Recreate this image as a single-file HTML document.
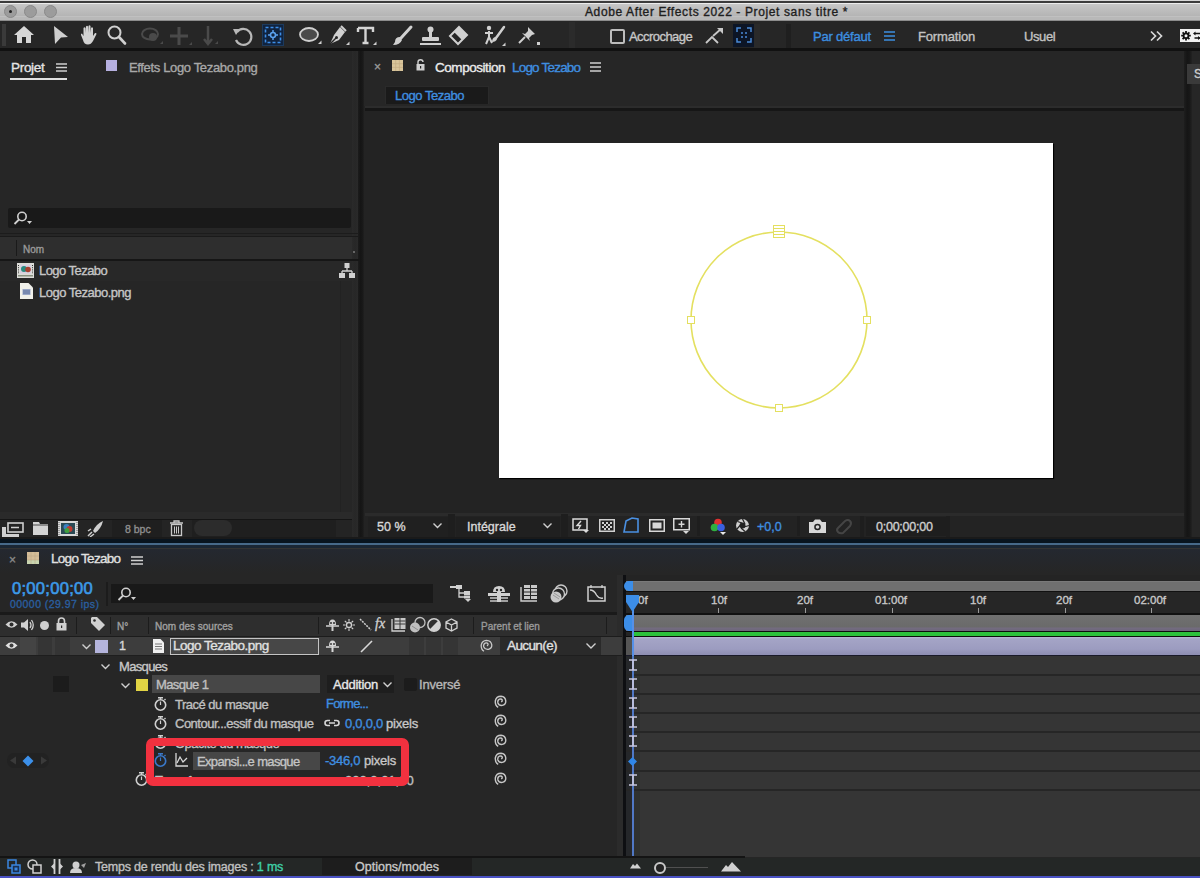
<!DOCTYPE html>
<html><head><meta charset="utf-8">
<style>
*{margin:0;padding:0;box-sizing:border-box}
html,body{width:1200px;height:878px;overflow:hidden;background:#1b1b1b;font-family:"Liberation Sans",sans-serif;}
.a{position:absolute}
.t{position:absolute;white-space:nowrap;line-height:1;-webkit-text-stroke:0.35px currentColor}
svg{position:absolute;overflow:visible}
</style></head><body>
<!-- TITLE BAR -->
<div class="a" style="left:0;top:0;width:1200px;height:3px;background:#3c3c3c"></div>
<div class="a" style="left:0;top:0;width:1200px;height:1px;background:#d8d8d8"></div>
<div class="a" style="left:0;top:3px;width:1200px;height:18px;background:linear-gradient(#ececec 0,#ececec 1px,#c8c8c8 1px,#c2c2c2 4px,#b4b4b4 13px,#c0c0c0 13px,#c0c0c0 14px,#b8b8b8 14px,#b8b8b8 17px,#606060 18px)"></div>
<div class="a" style="left:4px;top:5px;width:13px;height:13px;border-radius:50%;background:#9c9c9c;border:1px solid #8a8a8a"></div>
<div class="a" style="left:9px;top:10px;width:3px;height:3px;border-radius:50%;background:#222"></div>
<div class="a" style="left:24px;top:5px;width:13px;height:13px;border-radius:50%;background:#9c9c9c;border:1px solid #8a8a8a"></div>
<div class="a" style="left:44px;top:5px;width:13px;height:13px;border-radius:50%;background:#9c9c9c;border:1px solid #8a8a8a"></div>
<div class="t" style="left:585px;top:6px;font-size:12px;color:#1e1e1e;letter-spacing:0.62px">Adobe After Effects 2022 - Projet sans titre *</div>

<!-- TOOLBAR -->
<div class="a" style="left:0;top:21px;width:1200px;height:28px;background:#262626"></div>
<div class="a" style="left:0;top:48px;width:1200px;height:3px;background:#111"></div>

<div class="a" style="left:2px;top:24px;width:4px;height:22px;background:#3a3a3a"></div>
<!-- home -->
<svg style="left:14px;top:26px" width="20" height="18" viewBox="0 0 20 18"><path d="M10 0 L20 9 L17 9 L17 17 L12 17 L12 11 L8 11 L8 17 L3 17 L3 9 L0 9 Z" fill="#d6d6d6"/></svg>
<!-- arrow -->
<svg style="left:53px;top:26px" width="16" height="19" viewBox="0 0 16 19"><path d="M1 0 L15 11 L8 11.5 L2 18 Z" fill="#cfcfcf"/></svg>
<!-- hand -->
<svg style="left:80px;top:25px" width="17" height="20" viewBox="0 0 17 20"><path d="M3.5 7 L3.5 3 Q4.5 1.5 5.5 3 L5.5 8 L6 1.5 Q7 0 8 1.5 L8 8 L8.5 1 Q9.5 -0.5 10.5 1 L10.5 8 L11 3 Q12 1.5 13 3 L13 11 L15 8 Q16.5 7.5 16.5 9 L13 16 Q11 19.5 8 19.5 Q4 19.5 3 15 L1 10 Q0.5 8.5 2 8.5 L3.5 11 Z" fill="#d2d2d2"/></svg>
<!-- zoom -->
<svg style="left:107px;top:25px" width="19" height="20" viewBox="0 0 19 20"><circle cx="7.5" cy="7.5" r="6" fill="none" stroke="#d0d0d0" stroke-width="2"/><path d="M12 12 L18 18.5" stroke="#d0d0d0" stroke-width="2.6" stroke-linecap="round"/></svg>
<!-- faded camera tools -->
<svg style="left:140px;top:26px" width="24" height="21" viewBox="0 0 24 21"><ellipse cx="10" cy="8" rx="8" ry="5.5" fill="none" stroke="#4a4a4a" stroke-width="2"/><circle cx="13" cy="11" r="4" fill="#4a4a4a"/><path d="M20 18 l3 0 l0 -3z" fill="#4a4a4a"/></svg>
<svg style="left:170px;top:27px" width="22" height="20" viewBox="0 0 22 20"><path d="M9 0 L9 18 M0 9 L18 9" stroke="#4a4a4a" stroke-width="3"/><path d="M19 18 l3 0 l0 -3z" fill="#4a4a4a"/></svg>
<svg style="left:202px;top:26px" width="16" height="21" viewBox="0 0 16 21"><path d="M6 0 L6 17 M2 13 L6 18 L10 13" stroke="#4a4a4a" stroke-width="2.5" fill="none"/><path d="M13 18 l3 0 l0 -3z" fill="#4a4a4a"/></svg>
<!-- rotation -->
<svg style="left:233px;top:27px" width="21" height="19" viewBox="0 0 21 19"><path d="M4 5 A8 8 0 1 1 3 13" fill="none" stroke="#b8b8b8" stroke-width="2.2"/><path d="M0 2 L7 2 L3 8 Z" fill="#b8b8b8"/></svg>
<!-- anchor active -->
<div class="a" style="left:262px;top:24px;width:22px;height:22px;background:#10233f;border:1px solid #1b3a5e"></div>
<svg style="left:264px;top:26px" width="18" height="18" viewBox="0 0 18 18"><rect x="1.5" y="1.5" width="15" height="15" fill="none" stroke="#3d8ee8" stroke-width="1.6" stroke-dasharray="3 2"/><circle cx="9" cy="9" r="2.5" fill="none" stroke="#5aa0ee" stroke-width="1.6"/><path d="M9 4 L9 6 M9 12 L9 14 M4 9 L6 9 M12 9 L14 9" stroke="#5aa0ee" stroke-width="1.5"/></svg>
<!-- ellipse -->
<svg style="left:299px;top:27px" width="23" height="18" viewBox="0 0 23 18"><ellipse cx="10" cy="7.5" rx="9" ry="6.5" fill="#4a4a4a" stroke="#cfcfcf" stroke-width="1.8"/><path d="M19 17 l3.5 0 l0 -3.5z" fill="#cfcfcf"/></svg>
<!-- pen -->
<svg style="left:328px;top:26px" width="22" height="20" viewBox="0 0 22 20"><path d="M12 1 L17 6 L11 14 L2 18 L6 9 Z" fill="#d0d0d0"/><path d="M2 18 L8 12" stroke="#262626" stroke-width="1.4"/><circle cx="8.5" cy="11.5" r="1.5" fill="#262626"/><path d="M13 0 L18 5" stroke="#d0d0d0" stroke-width="2"/><path d="M18 19 l3.5 0 l0 -3.5z" fill="#cfcfcf"/></svg>
<!-- T -->
<svg style="left:357px;top:27px" width="20" height="19" viewBox="0 0 20 19"><path d="M1 1 L16 1 L16 5 M1 1 L1 5 M8.5 1 L8.5 16 M5.5 16 L11.5 16" stroke="#d4d4d4" stroke-width="2.4" fill="none"/><path d="M16 18 l3.5 0 l0 -3.5z" fill="#cfcfcf"/></svg>
<!-- brush -->
<svg style="left:392px;top:26px" width="20" height="20" viewBox="0 0 20 20"><path d="M19 1 L9 12" stroke="#d0d0d0" stroke-width="3" stroke-linecap="round"/><path d="M8 11 Q3 11 3 16 L1 19 Q8 19 10 14 Z" fill="#d0d0d0"/></svg>
<!-- stamp -->
<svg style="left:420px;top:26px" width="21" height="20" viewBox="0 0 21 20"><circle cx="10.5" cy="3.5" r="3" fill="#d0d0d0"/><rect x="9" y="5" width="3" height="7" fill="#d0d0d0"/><rect x="2" y="11" width="17" height="4" rx="1" fill="#d0d0d0"/><rect x="0" y="17" width="21" height="2" fill="#d0d0d0"/></svg>
<!-- eraser -->
<svg style="left:448px;top:26px" width="20" height="20" viewBox="0 0 20 20"><path d="M11 1 L19 9 L10 18 L2 10 Z" fill="none" stroke="#d0d0d0" stroke-width="2"/><path d="M11 1 L19 9 L14 14 L6 6 Z" fill="#d0d0d0"/></svg>
<!-- roto -->
<svg style="left:482px;top:25px" width="24" height="22" viewBox="0 0 24 22"><circle cx="7" cy="3" r="2.2" fill="#d0d0d0"/><path d="M7 6 L7 12 M3 8 L11 8 M7 12 L4 19 M7 12 L10 18" stroke="#d0d0d0" stroke-width="2" fill="none"/><path d="M22 2 L14 13" stroke="#d0d0d0" stroke-width="2.5" stroke-linecap="round"/><path d="M13 12 Q10 13 10 17 Q14 17 15 14 Z" fill="#d0d0d0"/><path d="M20 21 l3.5 0 l0 -3.5z" fill="#cfcfcf"/></svg>
<!-- pin -->
<svg style="left:518px;top:25px" width="23" height="22" viewBox="0 0 23 22"><path d="M10 2 L17 9 L14 10 L11 13 L12 16 L4 8 L7 9 L10 6 Z" fill="#d0d0d0"/><path d="M7 12 L1 18" stroke="#d0d0d0" stroke-width="2"/><rect x="19" y="17" width="3" height="3" fill="#cfcfcf"/></svg>
<div class="a" style="left:569px;top:22px;width:6px;height:26px;background:#2b2b2b"></div><div class="a" style="left:754px;top:24px;width:6px;height:24px;background:#2a2a2a"></div><div class="a" style="left:786px;top:24px;width:5px;height:24px;background:#1f1f1f"></div>
<!-- Accrochage -->
<div class="a" style="left:610px;top:29px;width:15px;height:15px;border:2px solid #bdbdbd;border-radius:2px"></div>
<div class="t" style="left:629px;top:30px;font-size:13px;color:#c8c8c8;letter-spacing:-0.55px">Accrochage</div>
<svg style="left:705px;top:27px" width="19" height="18" viewBox="0 0 19 18"><path d="M1 16 L7 10 L13 16" stroke="#c8c8c8" stroke-width="1.8" fill="none"/><path d="M8 9 L16 2" stroke="#c8c8c8" stroke-width="1.8"/><path d="M12 1 L18 1 L18 7 Z" fill="#c8c8c8"/></svg>
<div class="a" style="left:733px;top:24px;width:21px;height:23px;background:#0c1526"></div>
<svg style="left:736px;top:27px" width="16" height="16" viewBox="0 0 16 16"><path d="M1 5 L1 1 L5 1 M11 1 L15 1 L15 5 M15 11 L15 15 L11 15 M5 15 L1 15 L1 11" stroke="#4a8ad8" stroke-width="1.5" fill="none"/><circle cx="6" cy="6" r="1" fill="#4a8ad8"/><circle cx="10" cy="6" r="1" fill="#4a8ad8"/><circle cx="6" cy="10" r="1" fill="#4a8ad8"/><circle cx="10" cy="10" r="1" fill="#4a8ad8"/></svg>
<!-- workspaces -->
<div class="t" style="left:813px;top:30px;font-size:13px;color:#3c8fe0;letter-spacing:-0.2px">Par défaut</div>
<svg style="left:884px;top:31px" width="11" height="10" viewBox="0 0 11 10"><path d="M0 1 H11 M0 5 H11 M0 9 H11" stroke="#3c8fe0" stroke-width="1.4"/></svg>
<div class="t" style="left:918px;top:30px;font-size:13px;color:#c2c2c2;letter-spacing:-0.15px">Formation</div>
<div class="t" style="left:1024px;top:30px;font-size:13px;color:#c2c2c2;letter-spacing:-0.4px">Usuel</div>
<svg style="left:1150px;top:30px" width="14" height="12" viewBox="0 0 14 12"><path d="M1 1.5 L5.5 6 L1 10.5 M7 1.5 L11.5 6 L7 10.5" stroke="#d8d8d8" stroke-width="1.7" fill="none"/></svg>
<div class="a" style="left:1180px;top:29px;width:20px;height:13px;background:#f0f0f0"></div><svg style="left:1180px;top:29px" width="20" height="13" viewBox="0 0 20 13"><g transform="translate(6 6.7)"><circle r="3.3" fill="#111"/><path d="M0 -4.8 V4.8 M-4.8 0 H4.8 M-3.4 -3.4 L3.4 3.4 M3.4 -3.4 L-3.4 3.4" stroke="#111" stroke-width="1.8"/><circle r="1.5" fill="#f0f0f0"/></g><path d="M14.5 4.5 H20 M20 9 H14.5" stroke="#111" stroke-width="1.3"/><path d="M13 4.5 L15.5 2.5 V6.5 Z M20.5 9 L18 7 V11 Z" fill="#111"/></svg>

<!-- PROJECT PANEL -->
<div class="a" style="left:0;top:51px;width:359px;height:486px;background:#262626"></div><div class="a" style="left:352px;top:51px;width:6px;height:486px;background:linear-gradient(90deg,#2a2a2a,#272727 50%,#2a2a2a)"></div>
<div class="a" style="left:358px;top:51px;width:6px;height:486px;background:linear-gradient(90deg,#1c1c1c,#151515 40%,#171717 70%,#202020)"></div>

<div class="t" style="left:11px;top:61px;font-size:13.5px;color:#e4e4e4;letter-spacing:-0.3px">Projet</div>
<svg style="left:56px;top:63px" width="11" height="9" viewBox="0 0 11 9"><path d="M0 1 H11 M0 4.5 H11 M0 8 H11" stroke="#cfcfcf" stroke-width="1.3"/></svg>
<div class="a" style="left:10px;top:78px;width:57px;height:2px;background:#e0e0e0"></div>
<div class="a" style="left:106px;top:60px;width:11px;height:11px;background:#b6b0e0"></div>
<div class="t" style="left:129px;top:61px;font-size:13px;color:#a8a8a8;letter-spacing:-0.35px">Effets  Logo Tezabo.png</div>
<!-- search -->
<div class="a" style="left:8px;top:208px;width:343px;height:20px;background:#191919;border-radius:2px"></div>
<svg style="left:13px;top:211px" width="20" height="14" viewBox="0 0 20 14"><circle cx="9" cy="5.5" r="4.2" fill="none" stroke="#d0d0d0" stroke-width="1.6"/><path d="M6 8.5 L1.5 13" stroke="#d0d0d0" stroke-width="1.8"/><path d="M14 10 L19 10 L16.5 13 Z" fill="#d0d0d0"/></svg>
<div class="a" style="left:0;top:233px;width:359px;height:1px;background:#1c1c1c"></div>
<div class="a" style="left:0;top:236px;width:359px;height:1px;background:#1a1a1a"></div>
<!-- header Nom -->
<div class="a" style="left:0;top:237px;width:352px;height:22px;background:#2e2e2e"></div>
<div class="a" style="left:16px;top:240px;width:1px;height:16px;background:#1a1a1a"></div>
<div class="t" style="left:23px;top:245px;font-size:10px;color:#9a9a9a">Nom</div>
<div class="a" style="left:353px;top:251px;width:2px;height:2px;background:#666"></div>
<div class="a" style="left:0;top:259px;width:359px;height:2px;background:#161616"></div>
<!-- rows -->
<div class="a" style="left:0;top:261px;width:352px;height:20px;background:#282828"></div>
<svg style="left:17px;top:263px" width="17" height="15" viewBox="0 0 17 15"><rect x="0" y="0" width="17" height="15" fill="#dcdcd8"/><rect x="3" y="1.5" width="11" height="9" fill="#d8d0e0"/><circle cx="7" cy="6" r="3" fill="#2a8a80"/><circle cx="11" cy="6.5" r="2.8" fill="#a84030"/><path d="M1.5 2 V11 M15.5 2 V11" stroke="#333" stroke-width="1" stroke-dasharray="1 1.2"/><rect x="1" y="12" width="15" height="1.5" fill="#889080"/></svg>
<div class="t" style="left:39px;top:264px;font-size:13px;color:#c6c6c6;letter-spacing:-0.55px">Logo Tezabo</div>
<svg style="left:339px;top:263px" width="16" height="15" viewBox="0 0 16 15"><rect x="5.5" y="0" width="5" height="5" fill="#d0d0d0"/><path d="M8 5 V8 M3 8 H13 M3 8 V10 M13 8 V10" stroke="#d0d0d0" stroke-width="1.3" fill="none"/><rect x="0" y="10" width="6" height="5" fill="#d0d0d0"/><rect x="10" y="10" width="6" height="5" fill="#d0d0d0"/></svg>
<svg style="left:20px;top:283px" width="13" height="16" viewBox="0 0 13 16"><path d="M0 0 H8.5 L13 4.5 V16 H0 Z" fill="#f0f0ea"/><rect x="2.5" y="6" width="8" height="6" fill="#9aa8c8"/><path d="M3 8 H10 M3 10 H10" stroke="#566a98" stroke-width="1"/></svg>
<div class="t" style="left:39px;top:286px;font-size:13px;color:#c6c6c6;letter-spacing:-0.5px">Logo Tezabo.png</div>

<div class="a" style="left:340px;top:281px;width:1px;height:232px;background:#222"></div>
<!-- bottom toolbar -->
<div class="a" style="left:0;top:512px;width:352px;height:7px;background:#2a2a2a"></div><div class="a" style="left:0;top:519px;width:352px;height:1px;background:#151515"></div>
<div class="a" style="left:0;top:520px;width:352px;height:17px;background:#242424"></div><div class="a" style="left:192px;top:520px;width:144px;height:17px;background:#1f1f1f"></div><div class="a" style="left:112px;top:520px;width:50px;height:17px;background:#1f1f1f"></div>
<svg style="left:2px;top:521px" width="21" height="16" viewBox="0 0 21 16"><rect x="6" y="2" width="15" height="9" fill="none" stroke="#d0d0d0" stroke-width="1.6"/><path d="M9 6.5 H17" stroke="#d0d0d0" stroke-width="1.5"/><rect x="0" y="6" width="4" height="10" fill="#d0d0d0"/><rect x="4" y="13" width="13" height="3" fill="#d0d0d0"/></svg>
<svg style="left:33px;top:522px" width="15" height="13" viewBox="0 0 15 13"><path d="M0 0 H6 L7 2 H15 V13 H0 Z" fill="#d4d4d4"/><path d="M0 3 H15" stroke="#232323" stroke-width="0.8"/></svg>
<svg style="left:58px;top:521px" width="20" height="15" viewBox="0 0 20 15"><rect x="0" y="0" width="20" height="15" fill="#d8d8d8"/><rect x="3" y="2" width="14" height="11" fill="#2a4a55"/><circle cx="8.5" cy="6" r="3" fill="#3a80c0"/><circle cx="11.5" cy="8" r="3" fill="#c03a30"/><circle cx="9" cy="9.5" r="2.5" fill="#40a040"/><path d="M1 1 V14 M19 1 V14" stroke="#666" stroke-width="1" stroke-dasharray="1 1"/></svg>
<svg style="left:88px;top:521px" width="16" height="16" viewBox="0 0 16 16"><path d="M15 0 Q8 3 5 10 L7 12 Q13 8 15 0 Z" fill="#d0d0d0"/><path d="M4 11 L0 15 M6 13 L2 16 M3 8 L0 10" stroke="#d0d0d0" stroke-width="1.5"/></svg>

<div class="t" style="left:125px;top:524px;font-size:10.5px;color:#8e8e8e">8 bpc</div>
<svg style="left:170px;top:521px" width="13" height="15" viewBox="0 0 13 15"><path d="M0 2 H13 M4 2 V0 H9 V2" stroke="#c8c8c8" stroke-width="1.3" fill="none"/><rect x="1.5" y="3.5" width="10" height="11" fill="none" stroke="#c8c8c8" stroke-width="1.3"/><path d="M4.5 5.5 V12.5 M6.5 5.5 V12.5 M8.5 5.5 V12.5" stroke="#c8c8c8" stroke-width="1"/></svg>
<div class="a" style="left:194px;top:520px;width:38px;height:16px;border-radius:8px;background:#2c2c2c"></div>

<!-- COMP PANEL -->
<div class="a" style="left:364px;top:51px;width:820px;height:486px;background:#232323"></div><div class="a" style="left:364px;top:51px;width:820px;height:55px;background:#262626"></div>
<div class="a" style="left:1184px;top:51px;width:8px;height:486px;background:linear-gradient(90deg,#1e1e1e,#151515 40%,#181818 70%,#222)"></div>
<div class="a" style="left:1192px;top:51px;width:8px;height:486px;background:#262626"></div>

<div class="t" style="left:374px;top:61px;font-size:12px;color:#9a9a9a">×</div>
<svg style="left:392px;top:60px" width="11" height="11" viewBox="0 0 11 11"><rect width="11" height="11" fill="#d8c49a"/><path d="M3.7 0 V11 M7.4 0 V11 M0 3.7 H11 M0 7.4 H11" stroke="#c0a880" stroke-width="0.6"/></svg>
<svg style="left:416px;top:59px" width="9" height="12" viewBox="0 0 9 12"><path d="M2 5 V3 Q2 0.8 4.5 0.8 Q7 0.8 7 3" fill="none" stroke="#cfcfcf" stroke-width="1.4"/><rect x="0.5" y="5" width="8" height="6.5" fill="#cfcfcf"/><rect x="4" y="7" width="1.2" height="2.5" fill="#232323"/></svg>
<div class="t" style="left:435px;top:61px;font-size:13.5px;color:#ececec;letter-spacing:-0.45px">Composition</div>
<div class="t" style="left:512px;top:61px;font-size:13.5px;color:#3f8fe0;letter-spacing:-0.8px">Logo Tezabo</div>
<svg style="left:590px;top:62px" width="11" height="10" viewBox="0 0 11 10"><path d="M0 1 H11 M0 5 H11 M0 9 H11" stroke="#cfcfcf" stroke-width="1.3"/></svg>
<div class="a" style="left:385px;top:86px;width:104px;height:18px;background:#1a1a1a;border:1px solid #2a2a2a;border-bottom:none"></div>
<div class="t" style="left:395px;top:89px;font-size:13px;color:#3f8fe0;letter-spacing:-0.47px">Logo Tezabo</div>
<div class="a" style="left:365px;top:106px;width:819px;height:2px;background:#2c2c2c"></div><div class="a" style="left:365px;top:108px;width:819px;height:3px;background:#161616"></div>
<!-- comp canvas -->
<div class="a" style="left:499px;top:143px;width:554px;height:335px;background:#ffffff;box-shadow:1px 1px 1px #000"></div>
<svg style="left:499px;top:143px" width="554" height="335" viewBox="0 0 554 335">
<circle cx="280" cy="177" r="88" fill="none" stroke="#e4e060" stroke-width="1.6"/>
<rect x="274.5" y="82.5" width="11" height="12" fill="#fff" stroke="#e4e060" stroke-width="1"/>
<path d="M275 85.5 H285 M275 88.5 H285 M275 91.5 H285" stroke="#e4e060" stroke-width="1"/>
<rect x="188.5" y="173.5" width="7" height="7" fill="#fff" stroke="#e4e060" stroke-width="1"/>
<rect x="364.5" y="173.5" width="7" height="7" fill="#fff" stroke="#e4e060" stroke-width="1"/>
<rect x="276.5" y="261.5" width="7" height="7" fill="#fff" stroke="#e4e060" stroke-width="1"/>
</svg>
<!-- right strip -->
<div class="a" style="left:1187px;top:64px;width:13px;height:20px;background:#3a3a3a"></div>
<div class="t" style="left:1194px;top:68px;font-size:12px;color:#cfcfcf">S</div>
<!-- viewer toolbar -->
<div class="a" style="left:365px;top:513px;width:819px;height:3px;background:#2b2b2b"></div>
<div class="a" style="left:368px;top:517px;width:80px;height:20px;background:#202020"></div>
<div class="t" style="left:377px;top:521px;font-size:12.5px;color:#d8d8d8">50 %</div>
<svg style="left:433px;top:523px" width="9" height="6" viewBox="0 0 9 6"><path d="M0.5 0.5 L4.5 4.5 L8.5 0.5" stroke="#cfcfcf" stroke-width="1.4" fill="none"/></svg>
<div class="a" style="left:448px;top:514px;width:7px;height:23px;background:#1e1e1e"></div>
<div class="a" style="left:456px;top:517px;width:104px;height:20px;background:#202020"></div>
<div class="t" style="left:467px;top:521px;font-size:12.5px;color:#d8d8d8">Intégrale</div>
<svg style="left:543px;top:523px" width="9" height="6" viewBox="0 0 9 6"><path d="M0.5 0.5 L4.5 4.5 L8.5 0.5" stroke="#cfcfcf" stroke-width="1.4" fill="none"/></svg>
<div class="a" style="left:561px;top:514px;width:7px;height:23px;background:#1e1e1e"></div>
<svg style="left:572px;top:518px" width="17" height="16" viewBox="0 0 17 16"><rect x="1" y="1" width="14" height="11" fill="none" stroke="#dcdcdc" stroke-width="1.5"/><path d="M9 3 L5 7.5 H8.5 L6.5 11" stroke="#dcdcdc" stroke-width="1.4" fill="none"/><path d="M11 12 H17 L14 15 Z" fill="#dcdcdc"/></svg>
<svg style="left:599px;top:519px" width="16" height="13" viewBox="0 0 16 13"><rect x="0.75" y="0.75" width="14.5" height="11.5" fill="none" stroke="#d0d0d0" stroke-width="1.5"/><path d="M3 3h2v2h-2zM7 3h2v2h-2zM11 3h2v2h-2zM5 5h2v2h-2zM9 5h2v2h-2zM3 7h2v2h-2zM7 7h2v2h-2zM11 7h2v2h-2zM5 9h2v2h-2zM9 9h2v2h-2z" fill="#d0d0d0"/></svg>
<svg style="left:623px;top:517px" width="17" height="17" viewBox="0 0 17 17"><path d="M3 4 L9 1 L15 2 L15 15 L1 15 Z" fill="none" stroke="#4a90e2" stroke-width="1.6"/></svg>
<svg style="left:649px;top:519px" width="16" height="13" viewBox="0 0 16 13"><rect x="0.75" y="0.75" width="14.5" height="11.5" fill="none" stroke="#d8d8d8" stroke-width="1.5"/><rect x="3.5" y="3.5" width="9" height="6" fill="#d8d8d8"/></svg>
<svg style="left:673px;top:518px" width="18" height="17" viewBox="0 0 18 17"><rect x="0.75" y="0.75" width="15.5" height="11" fill="none" stroke="#d8d8d8" stroke-width="1.5"/><path d="M8.5 3 V9.5 M5.5 6.25 H11.5" stroke="#d8d8d8" stroke-width="1.4"/><path d="M10 13 H16 L13 16 Z" fill="#d8d8d8"/></svg>
<div class="a" style="left:697px;top:516px;width:3px;height:20px;background:#1e1e1e"></div>
<svg style="left:709px;top:518px" width="18" height="17" viewBox="0 0 18 17"><circle cx="9" cy="4.5" r="3.8" fill="#e03030"/><circle cx="5.5" cy="9.5" r="3.8" fill="#30b040"/><circle cx="12" cy="9.5" r="3.8" fill="#3a60e0"/><path d="M11 14 H17 L14 17 Z" fill="#e8e8e8"/></svg>
<svg style="left:735px;top:518px" width="15" height="15" viewBox="0 0 15 15"><circle cx="7.5" cy="7.5" r="6.5" fill="#d0d0d0"/><circle cx="7.5" cy="7.5" r="3" fill="#232323"/><path d="M7.5 1 L10 6 M14 7.5 L9 9 M10 13.5 L6 10 M2 11 L5 7.5 M2.5 3.5 L7 5" stroke="#232323" stroke-width="1.2"/></svg>
<div class="t" style="left:757px;top:521px;font-size:12.5px;color:#3f8fe0">+0,0</div>
<div class="a" style="left:797px;top:516px;width:3px;height:20px;background:#1e1e1e"></div>
<svg style="left:809px;top:519px" width="17" height="14" viewBox="0 0 17 14"><path d="M0 3 H4 L6 0.5 H11 L13 3 H17 V14 H0 Z" fill="#d8d8d8"/><circle cx="8.5" cy="8" r="3.3" fill="#232323"/><circle cx="8.5" cy="8" r="1.8" fill="#d8d8d8"/></svg>
<svg style="left:835px;top:518px" width="18" height="16" viewBox="0 0 18 16"><path d="M3 10 L10 3 Q13 1 15 3 Q17 5 15 8 L8 15 Q5 16 3 14 Q1 12 3 10 Z" fill="none" stroke="#454545" stroke-width="2"/></svg>
<div class="a" style="left:860px;top:516px;width:4px;height:21px;background:#1e1e1e"></div>
<div class="a" style="left:866px;top:517px;width:80px;height:19px;background:#1e1e1e"></div>
<div class="t" style="left:876px;top:521px;font-size:12.5px;color:#cfcfcf;letter-spacing:-0.25px">0;00;00;00</div>
<div class="a" style="left:946px;top:516px;width:4px;height:21px;background:#1e1e1e"></div>

<!-- DIVIDER -->
<div class="a" style="left:0;top:537px;width:1200px;height:2px;background:#1a1a1a"></div>
<div class="a" style="left:0;top:539px;width:1200px;height:4px;background:#08141f"></div>
<div class="a" style="left:0;top:543px;width:1200px;height:2px;background:#46698a"></div>
<div class="a" style="left:0;top:545px;width:1200px;height:3px;background:#1a2634"></div><div class="a" style="left:0;top:548px;width:1200px;height:1px;background:#333"></div>

<!-- TIMELINE PANEL -->
<div class="a" style="left:0;top:549px;width:1200px;height:326px;background:#262626"></div><div class="a" style="left:0;top:549px;width:1200px;height:24px;background:linear-gradient(#242830,#262626)"></div>
<div class="a" style="left:0;top:875px;width:1200px;height:3px;background:#4a52c4"></div>

<div class="t" style="left:9px;top:554px;font-size:12px;color:#8a8a8a">×</div>
<svg style="left:27px;top:552px" width="12" height="12" viewBox="0 0 12 12"><rect width="12" height="12" fill="#d4bc98"/><rect y="8" width="12" height="4" fill="#c8d4b0"/><path d="M4 0 V12 M8 0 V12 M0 4 H12 M0 8 H12" stroke="#bca888" stroke-width="0.6"/></svg>
<div class="t" style="left:51px;top:552px;font-size:13.5px;color:#e0e0e0;letter-spacing:-0.7px">Logo Tezabo</div>
<svg style="left:131px;top:556px" width="12" height="9" viewBox="0 0 12 9"><path d="M0 1 H12 M0 4.5 H12 M0 8 H12" stroke="#cfcfcf" stroke-width="1.3"/></svg>
<div class="t" style="left:12px;top:580px;font-size:16.5px;color:#3c9ae8;letter-spacing:0.3px;-webkit-text-stroke:0.6px #3c9ae8">0;00;00;00</div>
<div class="t" style="left:10px;top:599px;font-size:10.5px;color:#2a5e9e;letter-spacing:0.45px">00000 (29.97 ips)</div>
<div class="a" style="left:106px;top:582px;width:2px;height:24px;background:#1c1c1c"></div>
<div class="a" style="left:111px;top:584px;width:322px;height:19px;background:#191919"></div>
<svg style="left:117px;top:587px" width="20" height="14" viewBox="0 0 20 14"><circle cx="9" cy="5.5" r="4.2" fill="none" stroke="#d0d0d0" stroke-width="1.6"/><path d="M6 8.5 L1.5 13" stroke="#d0d0d0" stroke-width="1.8"/><path d="M14 10 L19 10 L16.5 13 Z" fill="#d0d0d0"/></svg>
<!-- timeline tool icons -->
<svg style="left:450px;top:585px" width="22" height="17" viewBox="0 0 22 17"><path d="M0 2 H6" stroke="#d0d0d0" stroke-width="2"/><rect x="6" y="0" width="6" height="4" fill="#d0d0d0"/><path d="M9 4 V12 H14 M9 8 H14" stroke="#d0d0d0" stroke-width="1.3" fill="none"/><rect x="14" y="6" width="6" height="4" fill="#d0d0d0"/><rect x="14" y="10.5" width="6" height="3" fill="#d0d0d0"/><path d="M15 14 H21 L18 17 Z" fill="#d0d0d0"/></svg>
<svg style="left:488px;top:585px" width="22" height="17" viewBox="0 0 22 17"><path d="M5 7 Q5 1 11 1 Q17 1 17 7 Z" fill="#d0d0d0"/><circle cx="9" cy="5" r="1.2" fill="#262626"/><circle cx="13" cy="5" r="1.2" fill="#262626"/><rect x="0" y="8" width="22" height="3" fill="#d0d0d0"/><rect x="2" y="12" width="18" height="2" fill="#a0a0a0"/><rect x="2" y="15" width="18" height="2" fill="#a0a0a0"/><rect x="9" y="7" width="4" height="10" fill="#d0d0d0"/></svg>
<svg style="left:520px;top:585px" width="18" height="17" viewBox="0 0 18 17"><path d="M1 2 V16 H17" stroke="#d0d0d0" stroke-width="1.4" fill="none"/><rect x="4" y="0" width="13" height="14" fill="#c8c8c8"/><path d="M4 3.5 H17 M4 7 H17 M4 10.5 H17 M10.5 0 V14" stroke="#262626" stroke-width="1"/></svg>
<svg style="left:549px;top:585px" width="19" height="18" viewBox="0 0 19 18"><circle cx="12" cy="6" r="6" fill="none" stroke="#c8c8c8" stroke-width="1.4"/><circle cx="9.5" cy="9" r="6" fill="#262626" stroke="#c8c8c8" stroke-width="1.4"/><circle cx="7" cy="12" r="5.5" fill="#c8c8c8"/><path d="M4 10 L10 14 M5 8 L11 12" stroke="#8a8a8a" stroke-width="0.8"/></svg>
<svg style="left:587px;top:585px" width="19" height="17" viewBox="0 0 19 17"><rect x="1" y="2" width="17" height="14" fill="none" stroke="#d0d0d0" stroke-width="1.5"/><path d="M3 5 Q7 5 9.5 10 Q12 14 16 13" stroke="#d0d0d0" stroke-width="1.4" fill="none"/><path d="M4 0 V3 M15 0 V3" stroke="#d0d0d0" stroke-width="1.3"/></svg>
<div class="a" style="left:0;top:612px;width:622px;height:3px;background:#1a1a1a"></div>
<!-- header row -->
<div class="a" style="left:0;top:615px;width:622px;height:21px;background:#2e2e2e"></div>
<svg style="left:5px;top:620px" width="13" height="9" viewBox="0 0 13 9"><path d="M0.5 4.5 Q6.5 -2 12.5 4.5 Q6.5 11 0.5 4.5 Z" fill="#d0d0d0"/><circle cx="6.5" cy="4.5" r="2" fill="#2c2c2c"/></svg>
<svg style="left:21px;top:618px" width="14" height="14" viewBox="0 0 14 14"><path d="M0 4.5 H3 L7 1 V13 L3 9.5 H0 Z" fill="#d0d0d0"/><path d="M9 4 Q11 7 9 10 M10.5 2 Q14 7 10.5 12" stroke="#d0d0d0" stroke-width="1.3" fill="none"/></svg>
<div class="a" style="left:40px;top:621px;width:9px;height:9px;border-radius:50%;background:#cfcfcf"></div>
<svg style="left:56px;top:617px" width="11" height="14" viewBox="0 0 11 14"><path d="M2.5 6 V4 Q2.5 1 5.5 1 Q8.5 1 8.5 4 V6" fill="none" stroke="#d0d0d0" stroke-width="1.6"/><rect x="0.5" y="6" width="10" height="7.5" fill="#d0d0d0"/><rect x="5" y="8.5" width="1.2" height="2.5" fill="#2c2c2c"/></svg>
<div class="a" style="left:76px;top:617px;width:1px;height:17px;background:#1c1c1c"></div>
<svg style="left:91px;top:617px" width="14" height="14" viewBox="0 0 14 14"><path d="M0 1 V6 L8 14 L14 8 L6 0 H1 Z" fill="#d0d0d0"/><circle cx="3.5" cy="3.5" r="1.3" fill="#2c2c2c"/></svg>
<div class="a" style="left:110px;top:617px;width:1px;height:17px;background:#1c1c1c"></div>
<div class="t" style="left:117px;top:622px;font-size:10px;color:#a0a0a0">N°</div>
<div class="a" style="left:148px;top:617px;width:1px;height:17px;background:#1c1c1c"></div>
<div class="t" style="left:155px;top:622px;font-size:10px;color:#a0a0a0">Nom des sources</div>
<div class="a" style="left:318px;top:617px;width:1px;height:17px;background:#1c1c1c"></div>

<div class="a" style="left:622px;top:575px;width:578px;height:282px;background:#242424"></div><div class="a" style="left:617px;top:575px;width:6px;height:282px;background:#2b2b2b"></div><div class="a" style="left:623px;top:575px;width:3px;height:282px;background:#0e0f12"></div><div class="a" style="left:626px;top:581px;width:574px;height:10px;background:#707070;border-top:1px solid #7a7a7a"></div><div class="a" style="left:624px;top:581px;width:9px;height:10px;background:#3c8ee8;border-radius:5px 0 0 5px"></div><div class="a" style="left:626px;top:591px;width:574px;height:1px;background:#111"></div><div class="a" style="left:626px;top:592px;width:574px;height:21px;background:#262626"></div><div class="t" style="left:638px;top:595px;font-size:11.5px;color:#c8c8c8">0f</div><div class="t" style="left:711px;top:595px;font-size:11.5px;color:#c8c8c8">10f</div><div class="t" style="left:797px;top:595px;font-size:11.5px;color:#c8c8c8">20f</div><div class="t" style="left:875px;top:595px;font-size:11.5px;color:#c8c8c8">01:00f</div><div class="t" style="left:970px;top:595px;font-size:11.5px;color:#c8c8c8">10f</div><div class="t" style="left:1056px;top:595px;font-size:11.5px;color:#c8c8c8">20f</div><div class="t" style="left:1134px;top:595px;font-size:11.5px;color:#c8c8c8">02:00f</div><div class="a" style="left:718px;top:608px;width:1px;height:5px;background:#9a9a9a"></div><div class="a" style="left:805px;top:608px;width:1px;height:5px;background:#9a9a9a"></div><div class="a" style="left:892px;top:608px;width:1px;height:5px;background:#9a9a9a"></div><div class="a" style="left:978px;top:608px;width:1px;height:5px;background:#9a9a9a"></div><div class="a" style="left:1065px;top:608px;width:1px;height:5px;background:#9a9a9a"></div><div class="a" style="left:1151px;top:608px;width:1px;height:5px;background:#9a9a9a"></div><div class="a" style="left:626px;top:613px;width:574px;height:2px;background:#111"></div><div class="a" style="left:626px;top:615px;width:574px;height:16px;background:linear-gradient(#707070 0,#6a6a6a 12px,#746c80 13px,#6c667a 16px)"></div><div class="a" style="left:624px;top:615px;width:9px;height:16px;background:#3c8ee8;border-radius:5px 0 0 5px"></div><div class="a" style="left:626px;top:631px;width:574px;height:1px;background:#0c0c0c"></div><div class="a" style="left:633px;top:632px;width:567px;height:4px;background:#2cc03c"></div><div class="a" style="left:626px;top:636px;width:574px;height:1px;background:#0c0c0c"></div><div class="a" style="left:626px;top:637px;width:6px;height:18px;background:#555"></div><div class="a" style="left:633px;top:637px;width:567px;height:18px;background:linear-gradient(#b8b8d4 0,#a4a4c6 2px,#9c9cc0 12px,#8e8eb2 18px)"></div><div class="a" style="left:626px;top:655px;width:574px;height:1px;background:#1a1a2a"></div><div class="a" style="left:626px;top:656px;width:574px;height:201px;background:#353535"></div><div class="a" style="left:626px;top:656px;width:6px;height:201px;background:#25272a"></div><div class="a" style="left:634px;top:656px;width:6px;height:201px;background:#2f312f"></div><div class="a" style="left:626px;top:674px;width:574px;height:2px;background:#262626"></div><div class="a" style="left:626px;top:693px;width:574px;height:2px;background:#262626"></div><div class="a" style="left:626px;top:712px;width:574px;height:2px;background:#262626"></div><div class="a" style="left:626px;top:731px;width:574px;height:2px;background:#262626"></div><div class="a" style="left:626px;top:750px;width:574px;height:2px;background:#262626"></div><div class="a" style="left:626px;top:770px;width:574px;height:2px;background:#262626"></div><div class="a" style="left:626px;top:789px;width:574px;height:2px;background:#262626"></div><div class="a" style="left:632px;top:605px;width:2px;height:52px;background:#5590e8"></div><div class="a" style="left:632px;top:656px;width:2px;height:201px;background:#5078c4"></div><svg style="left:625px;top:594px" width="15" height="19" viewBox="0 0 15 19"><path d="M1 1 H14 V8 L7.5 18 L1 8 Z" fill="#3c8ee8"/></svg><svg style="left:628px;top:659px" width="10" height="12" viewBox="0 0 10 12"><path d="M1 1 H9 M1 11 H9 M5 1 V11" stroke="#c8c8e0" stroke-width="1.7"/></svg><svg style="left:628px;top:678px" width="10" height="12" viewBox="0 0 10 12"><path d="M1 1 H9 M1 11 H9 M5 1 V11" stroke="#c8c8e0" stroke-width="1.7"/></svg><svg style="left:628px;top:697px" width="10" height="12" viewBox="0 0 10 12"><path d="M1 1 H9 M1 11 H9 M5 1 V11" stroke="#c8c8e0" stroke-width="1.7"/></svg><svg style="left:628px;top:716px" width="10" height="12" viewBox="0 0 10 12"><path d="M1 1 H9 M1 11 H9 M5 1 V11" stroke="#c8c8e0" stroke-width="1.7"/></svg><svg style="left:628px;top:735px" width="10" height="12" viewBox="0 0 10 12"><path d="M1 1 H9 M1 11 H9 M5 1 V11" stroke="#c8c8e0" stroke-width="1.7"/></svg><svg style="left:628px;top:774px" width="10" height="12" viewBox="0 0 10 12"><path d="M1 1 H9 M1 11 H9 M5 1 V11" stroke="#c8c8e0" stroke-width="1.7"/></svg><svg style="left:628px;top:757px" width="9" height="9" viewBox="0 0 9 9"><path d="M4.5 0 L9 4.5 L4.5 9 L0 4.5 Z" fill="#2f86e6"/></svg><div class="a" style="left:0;top:856px;width:745px;height:2px;background:#141414"></div><div class="a" style="left:0;top:858px;width:1200px;height:18px;background:#242726"></div><svg style="left:7px;top:859px" width="14" height="15" viewBox="0 0 14 15"><rect x="1" y="1" width="8" height="8" fill="none" stroke="#3a86e0" stroke-width="1.5"/><rect x="5" y="6" width="8" height="8" fill="#1a3050" stroke="#3a86e0" stroke-width="1.5"/><rect x="7.5" y="8.5" width="3" height="3" fill="#3a86e0"/></svg><svg style="left:27px;top:859px" width="15" height="15" viewBox="0 0 15 15"><circle cx="5.5" cy="5.5" r="4.5" fill="none" stroke="#d0d0d0" stroke-width="1.5"/><rect x="6" y="6" width="8" height="8" fill="#232323" stroke="#d0d0d0" stroke-width="1.5"/></svg><svg style="left:51px;top:859px" width="12" height="15" viewBox="0 0 12 15"><path d="M3.5 0 V15 M8.5 0 V15" stroke="#d0d0d0" stroke-width="1.8"/><path d="M0 7.5 L3 4.5 V10.5 Z M12 7.5 L9 4.5 V10.5 Z" fill="#d0d0d0"/></svg><svg style="left:70px;top:860px" width="16" height="13" viewBox="0 0 16 13"><circle cx="6" cy="5" r="3.5" fill="#d0d0d0"/><path d="M0 13 Q0 8 6 8 Q12 8 12 13 Z" fill="#d0d0d0"/><path d="M11 5 L16 3 L14 8 Z" fill="#a0a0a0"/></svg><div class="t" style="left:95px;top:861px;font-size:12.5px;color:#c0c0c0;letter-spacing:-0.2px">Temps de rendu des images : <span style="color:#3fd0a8">1 ms</span></div><div class="a" style="left:322px;top:858px;width:150px;height:17px;background:#1d1d1d"></div><div class="t" style="left:355px;top:861px;font-size:12.5px;color:#c8c8c8">Options/modes</div><svg style="left:630px;top:863px" width="11" height="6" viewBox="0 0 11 6"><path d="M0 5.5 L3 1 L5 3 L7 0.5 L11 5.5 Z" fill="#d0d0d0"/></svg><div class="a" style="left:666px;top:867px;width:42px;height:1px;background:#505050"></div><div class="a" style="left:654px;top:862px;width:12px;height:12px;border-radius:50%;border:2px solid #c8c8c8;background:#232323"></div><svg style="left:721px;top:862px" width="20" height="10" viewBox="0 0 20 10"><path d="M0 9.5 L5 3 L7 5 L11 0 L20 9.5 Z" fill="#d0d0d0"/></svg>
<!-- header switches -->
<svg style="left:326px;top:619px" width="13" height="12" viewBox="0 0 13 12"><path d="M3 6 Q3 0.5 6.5 0.5 Q10 0.5 10 6 Z" fill="#d0d0d0"/><circle cx="5" cy="4" r="1" fill="#2c2c2c"/><circle cx="8" cy="4" r="1" fill="#2c2c2c"/><path d="M0 7 H13" stroke="#d0d0d0" stroke-width="1.5"/><rect x="5.5" y="6" width="2" height="6" fill="#d0d0d0"/></svg>
<svg style="left:343px;top:619px" width="12" height="12" viewBox="0 0 12 12"><circle cx="6" cy="6" r="2.5" fill="none" stroke="#d0d0d0" stroke-width="1.3"/><path d="M6 0 V2.5 M6 9.5 V12 M0 6 H2.5 M9.5 6 H12 M1.8 1.8 L3.5 3.5 M8.5 8.5 L10.2 10.2 M10.2 1.8 L8.5 3.5 M1.8 10.2 L3.5 8.5" stroke="#d0d0d0" stroke-width="1.1"/></svg>
<svg style="left:359px;top:618px" width="13" height="13" viewBox="0 0 13 13"><path d="M1 1 L12 12" stroke="#d0d0d0" stroke-width="1.5" stroke-dasharray="2 1"/></svg>
<div class="t" style="left:375px;top:617px;font-size:14px;color:#d0d0d0;font-family:'Liberation Serif',serif;font-style:italic">fx</div>
<svg style="left:391px;top:618px" width="15" height="14" viewBox="0 0 15 14"><path d="M1 1 V13 H14" stroke="#d0d0d0" stroke-width="1.3" fill="none"/><rect x="3.5" y="0" width="11" height="11" fill="#c8c8c8"/><path d="M3.5 3 H14.5 M3.5 6 H14.5 M9 0 V11" stroke="#2c2c2c" stroke-width="0.9"/></svg>
<svg style="left:409px;top:617px" width="17" height="16" viewBox="0 0 17 16"><circle cx="11" cy="5.5" r="5" fill="none" stroke="#c0c0c0" stroke-width="1.3"/><circle cx="6" cy="10.5" r="5" fill="#c0c0c0"/><path d="M3 9 L9 13" stroke="#808080" stroke-width="0.8"/></svg>
<svg style="left:427px;top:618px" width="14" height="14" viewBox="0 0 14 14"><circle cx="7" cy="7" r="6.2" fill="none" stroke="#d0d0d0" stroke-width="1.5"/><path d="M11.4 2.6 A6.2 6.2 0 0 1 2.6 11.4 Z" fill="#d0d0d0"/></svg>
<svg style="left:445px;top:618px" width="13" height="14" viewBox="0 0 13 14"><path d="M6.5 1 L12 4 V10 L6.5 13 L1 10 V4 Z M1 4 L6.5 7 L12 4 M6.5 7 V13" fill="none" stroke="#d0d0d0" stroke-width="1.3"/></svg>
<div class="a" style="left:473px;top:617px;width:1px;height:17px;background:#1c1c1c"></div>
<div class="t" style="left:481px;top:622px;font-size:10px;color:#9a9a9a">Parent et lien</div>
<div class="a" style="left:606px;top:617px;width:1px;height:17px;background:#1c1c1c"></div>
<div class="a" style="left:0;top:636px;width:622px;height:1px;background:#1c1c1c"></div>
<!-- layer row -->
<div class="a" style="left:0;top:637px;width:622px;height:18px;background:#3d3d3d"></div>
<svg style="left:5px;top:641px" width="13" height="9" viewBox="0 0 13 9"><path d="M0.5 4.5 Q6.5 -2 12.5 4.5 Q6.5 11 0.5 4.5 Z" fill="#e0e0e0"/><circle cx="6.5" cy="4.5" r="2" fill="#3d3d3d"/></svg>
<div class="a" style="left:20px;top:637px;width:16px;height:18px;background:#444"></div>
<div class="a" style="left:38px;top:637px;width:14px;height:18px;background:#353535"></div>
<div class="a" style="left:55px;top:637px;width:15px;height:18px;background:#353535"></div>
<svg style="left:82px;top:644px" width="9" height="6" viewBox="0 0 9 6"><path d="M0.5 0.5 L4.5 4.5 L8.5 0.5" stroke="#cfcfcf" stroke-width="1.4" fill="none"/></svg>
<div class="a" style="left:95px;top:640px;width:13px;height:13px;background:#b4b4dc"></div>
<div class="t" style="left:119px;top:640px;font-size:12.5px;color:#d8d8d8">1</div>
<svg style="left:153px;top:639px" width="11" height="14" viewBox="0 0 11 14"><path d="M0 0 H7.5 L11 3.5 V14 H0 Z" fill="#f0f0f0"/><path d="M2 5 H9 M2 7.5 H9 M2 10 H9" stroke="#777" stroke-width="1"/></svg>
<div class="a" style="left:170px;top:638px;width:149px;height:17px;background:#474747;border:1.5px solid #c4c4c4"></div>
<div class="t" style="left:173px;top:639px;font-size:13.5px;color:#e0e0e0;letter-spacing:-0.5px">Logo Tezabo.png</div>
<svg style="left:326px;top:640px" width="13" height="12" viewBox="0 0 13 12"><path d="M3 6 Q3 0.5 6.5 0.5 Q10 0.5 10 6 Z" fill="#d8d8d8"/><circle cx="5" cy="4" r="1" fill="#3d3d3d"/><circle cx="8" cy="4" r="1" fill="#3d3d3d"/><path d="M0 7 H13" stroke="#d8d8d8" stroke-width="1.5"/><rect x="5.5" y="6" width="2" height="6" fill="#d8d8d8"/></svg>
<svg style="left:360px;top:640px" width="13" height="13" viewBox="0 0 13 13"><path d="M1 12 L12 1" stroke="#d8d8d8" stroke-width="1.6"/></svg>
<div class="a" style="left:409px;top:637px;width:15px;height:18px;background:#353535"></div>
<div class="a" style="left:426px;top:637px;width:15px;height:18px;background:#353535"></div>
<div class="a" style="left:443px;top:637px;width:15px;height:18px;background:#353535"></div>
<svg style="left:480px;top:639px" width="14" height="14" viewBox="0 0 14 14"><path d="M7 7 Q8.5 6 8 4.8 Q7 3.2 5 4.2 Q3 5.5 3.8 8 Q5 10.8 8.5 10.3 Q12 9.5 11.8 5.8 Q11 1.5 6.5 1.3 Q2 1.5 1.2 6 Q1 10.5 4 12.3" fill="none" stroke="#c8c8c8" stroke-width="1.3"/></svg>
<div class="a" style="left:500px;top:637px;width:101px;height:18px;background:#2a2a2a"></div>
<div class="t" style="left:507px;top:639px;font-size:13.5px;color:#e0e0e0;letter-spacing:-0.6px">Aucun(e)</div>
<svg style="left:586px;top:643px" width="10" height="6" viewBox="0 0 10 6"><path d="M0.5 0.5 L5 5 L9.5 0.5" stroke="#d0d0d0" stroke-width="1.4" fill="none"/></svg>
<div class="a" style="left:0;top:655px;width:622px;height:1px;background:#1e1e1e"></div>
<!-- Masques -->
<svg style="left:101px;top:664px" width="9" height="6" viewBox="0 0 9 6"><path d="M0.5 0.5 L4.5 4.5 L8.5 0.5" stroke="#cfcfcf" stroke-width="1.4" fill="none"/></svg>
<div class="t" style="left:119px;top:660px;font-size:13px;color:#c8c8c8;letter-spacing:-0.65px">Masques</div>
<div class="a" style="left:53px;top:676px;width:16px;height:16px;background:#1c1c1c"></div>
<svg style="left:121px;top:683px" width="9" height="6" viewBox="0 0 9 6"><path d="M0.5 0.5 L4.5 4.5 L8.5 0.5" stroke="#cfcfcf" stroke-width="1.4" fill="none"/></svg>
<div class="a" style="left:136px;top:679px;width:12px;height:12px;background:#e2d444"></div>
<div class="a" style="left:152px;top:675px;width:168px;height:18px;background:#474747"></div>
<div class="t" style="left:156px;top:678px;font-size:13px;color:#c0c0c0;letter-spacing:-0.6px">Masque 1</div>
<div class="a" style="left:327px;top:675px;width:67px;height:18px;background:#1e1e1e"></div>
<div class="t" style="left:333px;top:678px;font-size:13px;color:#e8e8e8;letter-spacing:-0.25px">Addition</div>
<svg style="left:383px;top:682px" width="9" height="6" viewBox="0 0 9 6"><path d="M0.5 0.5 L4.5 4.5 L8.5 0.5" stroke="#d0d0d0" stroke-width="1.4" fill="none"/></svg>
<div class="a" style="left:404px;top:678px;width:13px;height:13px;background:#1c1c1c;border-radius:2px"></div>
<div class="t" style="left:419px;top:678px;font-size:13px;color:#b8b8b8;letter-spacing:-0.2px">Inversé</div>
<svg style="left:154px;top:697px" width="13" height="14" viewBox="0 0 13 14"><circle cx="6.5" cy="8" r="5.2" fill="none" stroke="#d0d0d0" stroke-width="1.6"/><path d="M4 0.8 H9 M6.5 1 V2.8 M10.5 3 L11.5 2" stroke="#d0d0d0" stroke-width="1.4"/><path d="M6.5 8 L6.5 4.5" stroke="#d0d0d0" stroke-width="1.2"/></svg><div class="t" style="left:175px;top:698px;font-size:13px;color:#c0c0c0;letter-spacing:-0.5px">Tracé du masque</div><div class="t" style="left:326px;top:697px;font-size:13px;color:#3f8fe0;letter-spacing:-0.8px">Forme...</div><svg style="left:154px;top:716px" width="13" height="14" viewBox="0 0 13 14"><circle cx="6.5" cy="8" r="5.2" fill="none" stroke="#d0d0d0" stroke-width="1.6"/><path d="M4 0.8 H9 M6.5 1 V2.8 M10.5 3 L11.5 2" stroke="#d0d0d0" stroke-width="1.4"/><path d="M6.5 8 L6.5 4.5" stroke="#d0d0d0" stroke-width="1.2"/></svg><div class="t" style="left:175px;top:717px;font-size:13px;color:#c0c0c0;letter-spacing:-0.5px">Contour...essif du masque</div><svg style="left:324px;top:719px" width="16" height="8" viewBox="0 0 16 8"><path d="M6 1.5 H3.5 Q1 1.5 1 4 Q1 6.5 3.5 6.5 H6 M10 1.5 H12.5 Q15 1.5 15 4 Q15 6.5 12.5 6.5 H10 M5 4 H11" fill="none" stroke="#d8d8d8" stroke-width="1.6"/></svg><div class="t" style="left:345px;top:717px;font-size:13px;color:#3f8fe0;letter-spacing:-0.25px">0,0,0,0</div><div class="t" style="left:386px;top:717px;font-size:13px;color:#c8c8c8;letter-spacing:-0.2px">pixels</div><svg style="left:154px;top:735px" width="13" height="14" viewBox="0 0 13 14"><circle cx="6.5" cy="8" r="5.2" fill="none" stroke="#d0d0d0" stroke-width="1.6"/><path d="M4 0.8 H9 M6.5 1 V2.8 M10.5 3 L11.5 2" stroke="#d0d0d0" stroke-width="1.4"/><path d="M6.5 8 L6.5 4.5" stroke="#d0d0d0" stroke-width="1.2"/></svg><div class="t" style="left:175px;top:737px;font-size:13px;color:#c0c0c0;letter-spacing:-0.5px">Opacité du masque</div><div class="a" style="left:7px;top:753px;width:42px;height:15px;border-radius:7px;background:#222"></div><svg style="left:8px;top:756px" width="9" height="9" viewBox="0 0 9 9"><path d="M8 0.5 L2 4.5 L8 8.5 Z" fill="#3a3a3a"/></svg><svg style="left:22px;top:755px" width="12" height="12" viewBox="0 0 12 12"><path d="M6 0.5 L11.5 6 L6 11.5 L0.5 6 Z" fill="#3c90ea"/></svg><svg style="left:40px;top:756px" width="9" height="9" viewBox="0 0 9 9"><path d="M1 0.5 L7 4.5 L1 8.5 Z" fill="#3a3a3a"/></svg><svg style="left:154px;top:753px" width="13" height="14" viewBox="0 0 13 14"><circle cx="6.5" cy="8" r="5.2" fill="none" stroke="#3a78c8" stroke-width="1.6"/><path d="M4 0.8 H9 M6.5 1 V2.8 M10.5 3 L11.5 2" stroke="#3a78c8" stroke-width="1.4"/><path d="M6.5 8 L6.5 4.5" stroke="#3a78c8" stroke-width="1.2"/></svg><svg style="left:175px;top:753px" width="13" height="14" viewBox="0 0 13 14"><path d="M1 0 V13 H13" stroke="#d8d8d8" stroke-width="1.3" fill="none"/><path d="M2 10 L5 4 L8 9 L12 5" stroke="#d8d8d8" stroke-width="1.3" fill="none"/></svg><div class="a" style="left:193px;top:752px;width:127px;height:18px;background:#474747"></div><div class="t" style="left:197px;top:755px;font-size:13px;color:#c4c4c4;letter-spacing:-0.65px">Expansi...e masque</div><div class="t" style="left:325px;top:754px;font-size:13px;color:#3f8fe0;letter-spacing:-0.3px">-346,0</div><div class="t" style="left:364px;top:754px;font-size:13px;color:#c8c8c8;letter-spacing:-0.2px">pixels</div><svg style="left:135px;top:772px" width="13" height="14" viewBox="0 0 13 14"><circle cx="6.5" cy="8" r="5.2" fill="none" stroke="#d0d0d0" stroke-width="1.6"/><path d="M4 0.8 H9 M6.5 1 V2.8 M10.5 3 L11.5 2" stroke="#d0d0d0" stroke-width="1.4"/><path d="M6.5 8 L6.5 4.5" stroke="#d0d0d0" stroke-width="1.2"/></svg><div class="t" style="left:155px;top:774px;font-size:13px;color:#c0c0c0">Transformer</div><div class="t" style="left:345px;top:774px;font-size:13px;color:#c0c0c0">300,0,01,00</div><svg style="left:494px;top:695px" width="14" height="14" viewBox="0 0 14 14"><path d="M7.2 7 Q8.6 6.2 8.2 4.9 Q7.4 3.4 5.4 4.2 Q3.3 5.3 3.9 8 Q4.9 10.8 8.3 10.4 Q11.8 9.7 11.8 6 Q11.4 1.6 7 1.3 Q2.2 1.3 1.3 6 Q1 10.4 4.2 12.4" fill="none" stroke="#c8c8c8" stroke-width="1.4"/></svg><svg style="left:494px;top:714px" width="14" height="14" viewBox="0 0 14 14"><path d="M7.2 7 Q8.6 6.2 8.2 4.9 Q7.4 3.4 5.4 4.2 Q3.3 5.3 3.9 8 Q4.9 10.8 8.3 10.4 Q11.8 9.7 11.8 6 Q11.4 1.6 7 1.3 Q2.2 1.3 1.3 6 Q1 10.4 4.2 12.4" fill="none" stroke="#c8c8c8" stroke-width="1.4"/></svg><svg style="left:494px;top:734px" width="14" height="14" viewBox="0 0 14 14"><path d="M7.2 7 Q8.6 6.2 8.2 4.9 Q7.4 3.4 5.4 4.2 Q3.3 5.3 3.9 8 Q4.9 10.8 8.3 10.4 Q11.8 9.7 11.8 6 Q11.4 1.6 7 1.3 Q2.2 1.3 1.3 6 Q1 10.4 4.2 12.4" fill="none" stroke="#c8c8c8" stroke-width="1.4"/></svg><svg style="left:494px;top:752px" width="14" height="14" viewBox="0 0 14 14"><path d="M7.2 7 Q8.6 6.2 8.2 4.9 Q7.4 3.4 5.4 4.2 Q3.3 5.3 3.9 8 Q4.9 10.8 8.3 10.4 Q11.8 9.7 11.8 6 Q11.4 1.6 7 1.3 Q2.2 1.3 1.3 6 Q1 10.4 4.2 12.4" fill="none" stroke="#c8c8c8" stroke-width="1.4"/></svg><svg style="left:494px;top:772px" width="14" height="14" viewBox="0 0 14 14"><path d="M7.2 7 Q8.6 6.2 8.2 4.9 Q7.4 3.4 5.4 4.2 Q3.3 5.3 3.9 8 Q4.9 10.8 8.3 10.4 Q11.8 9.7 11.8 6 Q11.4 1.6 7 1.3 Q2.2 1.3 1.3 6 Q1 10.4 4.2 12.4" fill="none" stroke="#c8c8c8" stroke-width="1.4"/></svg><div class="a" style="left:146px;top:738px;width:263px;height:48px;border:8px solid #f2313f;border-bottom-width:9px;border-radius:7px"></div>

</body></html>
